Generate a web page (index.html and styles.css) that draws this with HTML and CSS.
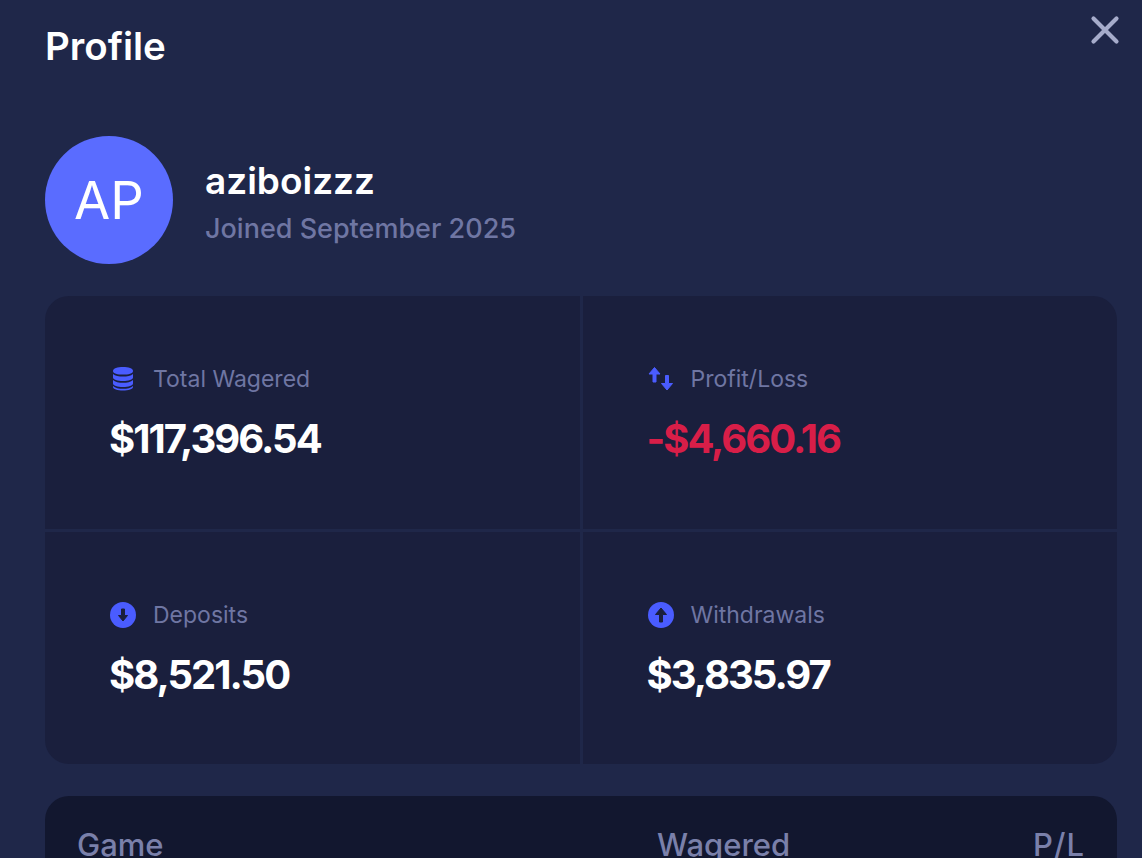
FILE: index.html
```html
<!DOCTYPE html>
<html lang="en">
<head>
    <meta charset="UTF-8">
    <meta name="viewport" content="width=device-width, initial-scale=1.0">
    <title>Profile</title>
    <link rel="stylesheet" href="styles.css">
</head>
<body>

    <div class="modal">
        <div class="modal-head">
            <h1>Profile</h1>
            <button class="close" aria-label="Close">
                <svg width="30" height="30" viewBox="0 0 30 30"><path d="M3.500 3.500 L26.500 26.500 M26.500 3.500 L3.500 26.500" fill="none" stroke="currentColor" stroke-width="4.200" stroke-linecap="round"/></svg>
            </button>
        </div>

        <div class="user">
            <div class="avatar">AP</div>
            <div class="user-info">
                <div class="username">aziboizzz</div>
                <div class="joined">Joined September 2025</div>
            </div>
        </div>

        <div class="stats">
            <div class="stat">
                <div class="stat-label">
                    <svg class="icon" width="28" height="28" viewBox="0 0 28 28"><g fill="#4a5cff"><path d="M4 6 C4 3.200 8.500 2 14 2 S24 3.200 24 6 S19.500 9.600 14 9.600 S4 8.800 4 6 Z"/><path d="M4 9 C6 11 10 11.600 14 11.600 S22 11 24 9 V12.500 C24 14.800 19.500 16 14 16 S4 14.800 4 12.500 Z"/><path d="M4 15 C6 17 10 17.800 14 17.800 S22 17 24 15 V18.500 C24 20.800 19.500 22 14 22 S4 20.800 4 18.500 Z"/><path d="M4 21 C6 23 10 23.800 14 23.800 S22 23 24 21 V21.800 C24 24.500 19.500 25.500 14 25.500 S4 24.500 4 21.800 Z"/></g></svg>
                    <span>Total Wagered</span>
                </div>
                <div class="stat-value">$117,396.54</div>
            </div>
            <div class="stat">
                <div class="stat-label">
                    <svg class="icon" width="28" height="28" viewBox="0 0 28 28"><g fill="#4a5cff" stroke="#4a5cff" stroke-width="1" stroke-linejoin="round"><path d="M7.500 2.500 L13 9 H9 V17 H6 V9 H2 Z"/><path d="M20 25 L14.500 18.500 H18.500 V10.500 H21.500 V18.500 H25.500 Z"/></g></svg>
                    <span>Profit/Loss</span>
                </div>
                <div class="stat-value loss">-$4,660.16</div>
            </div>
            <div class="stat">
                <div class="stat-label">
                    <svg class="icon" width="28" height="28" viewBox="0 0 28 28"><circle cx="14" cy="14" r="13" fill="#4a5cff"/><path d="M14 20 L9.500 14.500 H12.500 V8 H15.500 V14.500 H18.500 Z" fill="#1a1f3d" stroke="#1a1f3d" stroke-width="1" stroke-linejoin="round"/></svg>
                    <span>Deposits</span>
                </div>
                <div class="stat-value">$8,521.50</div>
            </div>
            <div class="stat">
                <div class="stat-label">
                    <svg class="icon" width="28" height="28" viewBox="0 0 28 28"><circle cx="14" cy="14" r="13" fill="#4a5cff"/><path d="M14 7 L19.500 13.500 H15.500 V21 H12.500 V13.500 H8.500 Z" fill="#1a1f3d" stroke="#1a1f3d" stroke-width="1" stroke-linejoin="round"/></svg>
                    <span>Withdrawals</span>
                </div>
                <div class="stat-value">$3,835.97</div>
            </div>
        </div>

        <div class="games">
            <div class="games-head">
                <div class="col-game">Game</div>
                <div class="col-wagered">Wagered</div>
                <div class="col-pl">P/L</div>
            </div>
        </div>
    </div>

</body>
</html>
```

FILE: styles.css
```css
body {
    overflow: hidden;
    margin: 0;
    height: 858px;
    background-color: #1f2749;
    font-family: "Inter", "Liberation Sans", sans-serif;
    color: #fff;
}
.modal {
    padding: 26px 25px 0 45px;
}
.modal-head {
    display: flex;
    justify-content: space-between;
    align-items: flex-start;
    height: 110px;
}
.modal-head h1 {
    margin: 0;
    font-size: 38.500px;
    line-height: 40px;
    font-weight: 600;
}
.close {
    margin: -11px -3px 0 0;
    padding: 0;
    border: 0;
    background: none;
    color: #a6accb;
}
.user {
    display: flex;
    align-items: center;
    gap: 32px;
    margin-bottom: 32px;
}
.user-info {
    padding-top: 5px;
}
.avatar {
    display: flex;
    justify-content: center;
    align-items: center;
    width: 128px;
    height: 128px;
    border-radius: 50%;
    background-color: #5a6cff;
    font-size: 52.500px;
}
.username {
    font-size: 37px;
    line-height: 44px;
    font-weight: 600;
}
.joined {
    margin-top: 8px;
    font-size: 27px;
    line-height: 36px;
    font-weight: 500;
    color: #6f76a3;
}
.stats {
    display: grid;
    grid-template-columns: 1fr 1fr;
    grid-template-rows: 233px 232px;
    gap: 3px;
    border-radius: 24px;
    overflow: hidden;
}
.stat {
    box-sizing: border-box;
    padding: 66px 64px 0;
    background-color: #1a1f3d;
}
.stat-label {
    display: flex;
    align-items: center;
    gap: 16px;
    height: 34px;
    font-size: 23px;
    color: #6f76a3;
}
.stat-value {
    margin-top: 20px;
    font-size: 40px;
    line-height: 46px;
    font-weight: 700;
    letter-spacing: -2px;
}
.loss {
    color: #d81e48;
}
.games {
    margin-top: 32px;
    height: 200px;
    border-radius: 24px;
    background-color: #12172f;
}
.games-head {
    display: flex;
    padding: 32px;
    font-size: 31px;
    line-height: 34px;
    font-weight: 500;
    color: #7a80aa;
}
.col-game {
    width: 580px;
}
.col-wagered {
    flex: 1;
}
.col-pl {
    letter-spacing: 1px;
}
```
